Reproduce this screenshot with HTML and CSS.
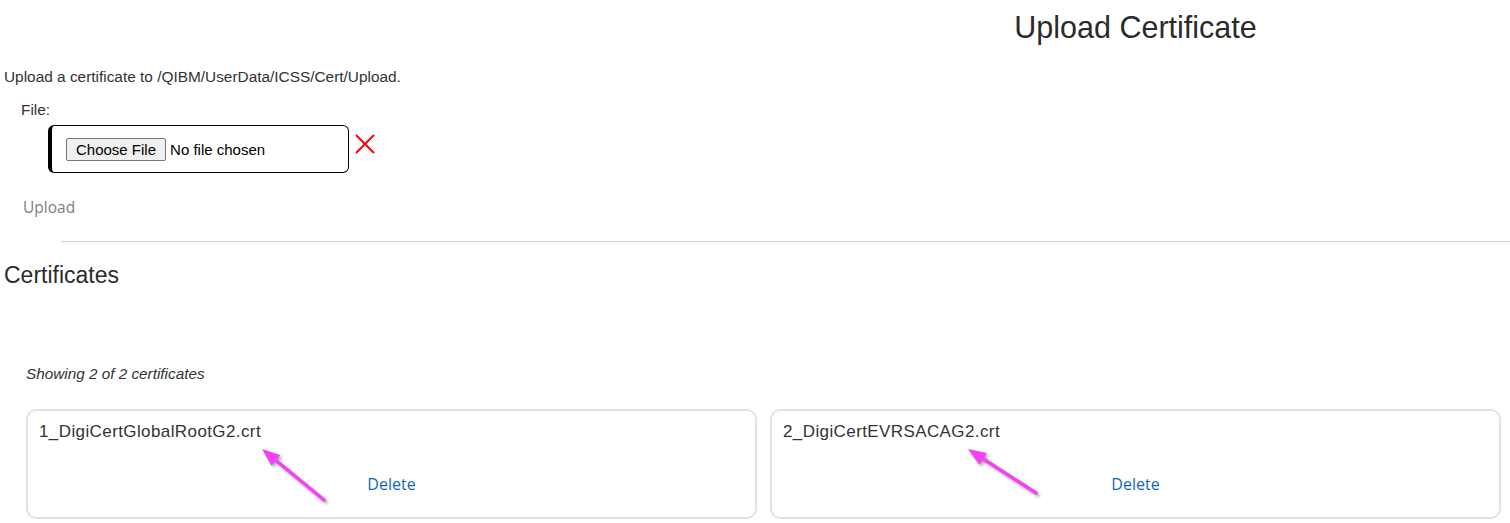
FILE: index.html
```html
<!DOCTYPE html>
<html lang="en">
<head>
<meta charset="utf-8">
<title>Upload Certificate</title>
<link rel="stylesheet" href="styles.css">
</head>
<body>
<header class="page-head">
  <h1 class="page-title">Upload Certificate</h1>
</header>

<section class="upload">
  <p class="upload-desc">Upload a certificate to /QIBM/UserData/ICSS/Cert/Upload.</p>
  <label class="file-label" for="cert-file">File:</label>
  <div class="file-row">
    <div class="file-box">
      <input class="file-input" id="cert-file" type="file">
    </div>
    <svg class="clear-icon" width="20" height="20" viewBox="0 0 20 20" aria-hidden="true">
      <path d="M1 1 L19 19 M19 1 L1 19" stroke="#ff0000" stroke-width="2" fill="none"/>
    </svg>
  </div>
  <div class="upload-btn">Upload</div>
</section>

<hr class="divider">

<section class="certs">
  <h2 class="certs-title">Certificates</h2>
  <p class="certs-count">Showing 2 of 2 certificates</p>
  <div class="cert-grid">
    <div class="cert-card">
      <div class="cert-name">1_DigiCertGlobalRootG2.crt</div>
      <a class="cert-delete" href="#">Delete</a>
      <svg class="annot" aria-hidden="true">
        <g class="annot-arrow">
          <line x1="296" y1="89" x2="248" y2="49.5" stroke="#f540f5" stroke-width="3.5" stroke-linecap="round"/>
          <polygon points="234,38 252.3,44 243.5,54.8" fill="#f540f5"/>
        </g>
      </svg>
    </div>
    <div class="cert-card">
      <div class="cert-name">2_DigiCertEVRSACAG2.crt</div>
      <a class="cert-delete" href="#">Delete</a>
      <svg class="annot" aria-hidden="true">
        <g class="annot-arrow">
          <line x1="264" y1="82" x2="211" y2="47.8" stroke="#f540f5" stroke-width="3.5" stroke-linecap="round"/>
          <polygon points="196,38 214.9,41.9 207.3,53.7" fill="#f540f5"/>
        </g>
      </svg>
    </div>
  </div>
</section>
</body>
</html>
```

FILE: styles.css
```css
* { box-sizing: border-box; }

html, body {
  margin: 0;
  padding: 0;
  background: #ffffff;
}

body {
  font-family: "Liberation Sans", Arial, sans-serif;
  color: #333333;
  font-size: 15.4px;
}

.page-head {
  padding: 10px 0 0 761px;
}

.page-title {
  margin: 0;
  text-align: center;
  font-size: 30.5px;
  font-weight: normal;
  line-height: 35px;
  color: #2b2b2b;
}

.upload-desc {
  margin: 23px 0 0 4px;
  line-height: 17px;
}

.file-label {
  display: block;
  margin: 16px 0 0 21px;
  line-height: 17px;
}

.file-row {
  display: flex;
  align-items: flex-start;
  gap: 6px;
  margin: 7px 0 0 48px;
}

.file-box {
  display: flex;
  align-items: center;
  width: 301px;
  height: 48px;
  padding-left: 14px;
  border: 1px solid #000000;
  border-left: 4px solid #000000;
  border-radius: 6px;
}

.file-input {
  font: 15px "Liberation Sans", Arial, sans-serif;
  color: #000000;
}

.file-input::file-selector-button {
  font: inherit;
  color: #000000;
  padding: 2px 9px;
  margin-right: 4px;
  border: 1px solid #767676;
  border-radius: 2px;
  background: #efefef;
}

.clear-icon {
  margin-top: 9px;
}

.upload-btn {
  margin: 24px 0 0 23px;
  font-family: "Open Sans", "Noto Sans", sans-serif;
  font-size: 15.5px;
  line-height: 20px;
  color: #7d7d7d;
}

.divider {
  margin: 24px 0 0 61px;
  border: 0;
  height: 1px;
  background: #d0d0d0;
}

.certs-title {
  margin: 20px 0 0 4px;
  font-size: 23px;
  font-weight: normal;
  line-height: 26px;
  color: #2b2b2b;
}

.certs-count {
  margin: 77px 0 0 26px;
  font-style: italic;
  font-size: 15.3px;
  line-height: 17px;
}

.cert-grid {
  display: grid;
  grid-template-columns: 1fr 1fr;
  gap: 13px;
  margin: 27px 9px 0 26px;
}

.cert-card {
  position: relative;
  display: flex;
  flex-direction: column;
  height: 110px;
  padding: 11px 11px 0;
  border: 2px solid #e2e2e2;
  border-radius: 10px;
}

.cert-name {
  font-size: 17px;
  letter-spacing: 0.4px;
  line-height: 20px;
  color: #333333;
}

.cert-delete {
  align-self: center;
  margin-top: 32px;
  font-family: "Open Sans", "Noto Sans", sans-serif;
  font-size: 16px;
  line-height: 20px;
  color: #1267c0;
  text-decoration: none;
}

.annot {
  position: absolute;
  inset: 0;
  width: 100%;
  height: 100%;
  pointer-events: none;
  overflow: visible;
}

.annot-arrow {
  filter: drop-shadow(2px 2px 1.5px rgba(0, 0, 0, 0.35));
}
```
